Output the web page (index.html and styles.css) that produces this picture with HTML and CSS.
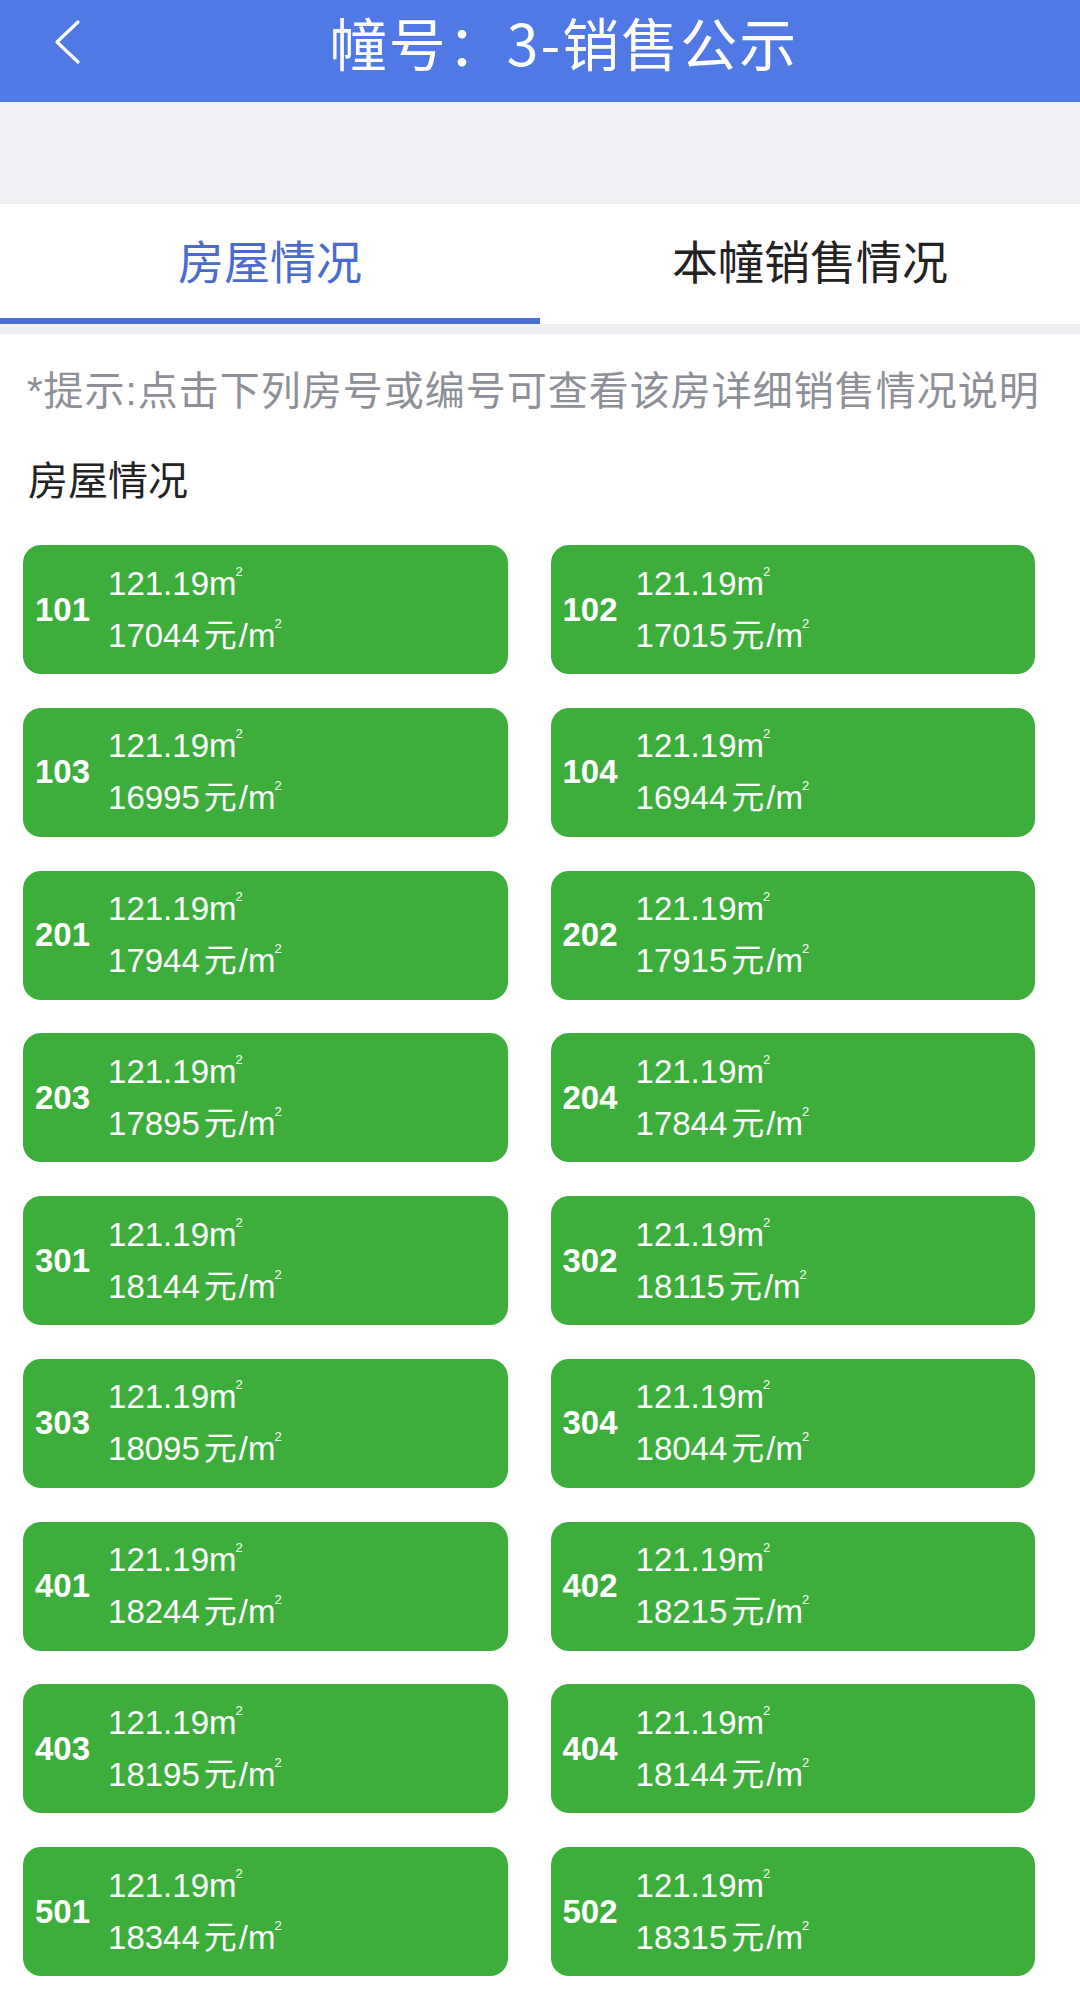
FILE: index.html
```html
<!DOCTYPE html>
<html lang="zh-CN">
<head>
<meta charset="utf-8">
<title>幢号：3-销售公示</title>
<link rel="stylesheet" href="styles.css">
</head>
<body>
<div class="page">
  <header class="topbar">
    <div class="back">
      <svg width="100" height="102" viewBox="0 0 100 102"><path d="M78 22 L57 42 L78 62" fill="none" stroke="#fff" stroke-width="3.2" stroke-linecap="round" stroke-linejoin="round"/></svg>
    </div>
    <h1 class="title">幢号：3-销售公示</h1>
    <div class="spacer"></div>
  </header>
  <div class="band"></div>
  <nav class="tabs">
    <div class="tab active">房屋情况</div>
    <div class="tab">本幢销售情况</div>
  </nav>
  <div class="divider"></div>
  <main class="content">
    <p class="hint">*提示:点击下列房号或编号可查看该房详细销售情况说明</p>
    <h2 class="section">房屋情况</h2>
    <div class="grid">
      <div class="card"><span class="no">101</span><div class="info"><div>121.19m<span class="sq">2</span></div><div>17044<span class="yuan">元</span>/m<span class="sq">2</span></div></div></div>
      <div class="card"><span class="no">102</span><div class="info"><div>121.19m<span class="sq">2</span></div><div>17015<span class="yuan">元</span>/m<span class="sq">2</span></div></div></div>
      <div class="card"><span class="no">103</span><div class="info"><div>121.19m<span class="sq">2</span></div><div>16995<span class="yuan">元</span>/m<span class="sq">2</span></div></div></div>
      <div class="card"><span class="no">104</span><div class="info"><div>121.19m<span class="sq">2</span></div><div>16944<span class="yuan">元</span>/m<span class="sq">2</span></div></div></div>
      <div class="card"><span class="no">201</span><div class="info"><div>121.19m<span class="sq">2</span></div><div>17944<span class="yuan">元</span>/m<span class="sq">2</span></div></div></div>
      <div class="card"><span class="no">202</span><div class="info"><div>121.19m<span class="sq">2</span></div><div>17915<span class="yuan">元</span>/m<span class="sq">2</span></div></div></div>
      <div class="card"><span class="no">203</span><div class="info"><div>121.19m<span class="sq">2</span></div><div>17895<span class="yuan">元</span>/m<span class="sq">2</span></div></div></div>
      <div class="card"><span class="no">204</span><div class="info"><div>121.19m<span class="sq">2</span></div><div>17844<span class="yuan">元</span>/m<span class="sq">2</span></div></div></div>
      <div class="card"><span class="no">301</span><div class="info"><div>121.19m<span class="sq">2</span></div><div>18144<span class="yuan">元</span>/m<span class="sq">2</span></div></div></div>
      <div class="card"><span class="no">302</span><div class="info"><div>121.19m<span class="sq">2</span></div><div>18115<span class="yuan">元</span>/m<span class="sq">2</span></div></div></div>
      <div class="card"><span class="no">303</span><div class="info"><div>121.19m<span class="sq">2</span></div><div>18095<span class="yuan">元</span>/m<span class="sq">2</span></div></div></div>
      <div class="card"><span class="no">304</span><div class="info"><div>121.19m<span class="sq">2</span></div><div>18044<span class="yuan">元</span>/m<span class="sq">2</span></div></div></div>
      <div class="card"><span class="no">401</span><div class="info"><div>121.19m<span class="sq">2</span></div><div>18244<span class="yuan">元</span>/m<span class="sq">2</span></div></div></div>
      <div class="card"><span class="no">402</span><div class="info"><div>121.19m<span class="sq">2</span></div><div>18215<span class="yuan">元</span>/m<span class="sq">2</span></div></div></div>
      <div class="card"><span class="no">403</span><div class="info"><div>121.19m<span class="sq">2</span></div><div>18195<span class="yuan">元</span>/m<span class="sq">2</span></div></div></div>
      <div class="card"><span class="no">404</span><div class="info"><div>121.19m<span class="sq">2</span></div><div>18144<span class="yuan">元</span>/m<span class="sq">2</span></div></div></div>
      <div class="card"><span class="no">501</span><div class="info"><div>121.19m<span class="sq">2</span></div><div>18344<span class="yuan">元</span>/m<span class="sq">2</span></div></div></div>
      <div class="card"><span class="no">502</span><div class="info"><div>121.19m<span class="sq">2</span></div><div>18315<span class="yuan">元</span>/m<span class="sq">2</span></div></div></div>
    </div>
  </main>
</div>
</body>
</html>
```

FILE: styles.css
```css
* { box-sizing: border-box; }
html, body { margin: 0; padding: 0; }
body {
  width: 1080px;
  height: 1995px;
  overflow: hidden;
  background: #ffffff;
  font-family: "Liberation Sans", "Noto Sans CJK SC", sans-serif;
  color: #222222;
}
.topbar {
  height: 102px;
  background: #5079E5;
  display: grid;
  grid-template-columns: 112px 1fr 64px;
  align-items: start;
}
.back { height: 102px; }
.back svg { display: block; }
.title {
  margin: 0;
  font-family: "Noto Sans CJK SC", sans-serif;
  font-weight: 400;
  font-size: 57px;
  line-height: 82px;
  letter-spacing: 2px;
  color: #ffffff;
  text-align: center;
  white-space: nowrap;
}
.band {
  height: 102px;
  background: #EFF0F4;
}
.tabs {
  display: grid;
  grid-template-columns: 1fr 1fr;
  background: #ffffff;
}
.tab {
  height: 120px;
  padding-bottom: 6px;
  line-height: 110px;
  text-align: center;
  font-family: "Noto Sans CJK SC", sans-serif;
  font-size: 46px;
  color: #222222;
  border-bottom: 6px solid transparent;
}
.tab.active {
  color: #4B6BCF;
  border-bottom-color: #4A6FD6;
}
.divider {
  height: 10px;
  background: #EFF0F4;
}
.content { padding: 0; }
.hint {
  margin: 27px 0 0;
  padding: 0 0 0 27px;
  font-size: 40px;
  line-height: 60px;
  color: #8E9098;
  white-space: nowrap;
  letter-spacing: 1px;
}
.section {
  margin: 27px 0 0;
  padding-left: 28px;
  font-family: "Noto Sans CJK SC", sans-serif;
  font-weight: 400;
  font-size: 40px;
  line-height: 60px;
  color: #222222;
}
.grid {
  margin-top: 37px;
  padding: 0 45px 0 23px;
  display: grid;
  grid-template-columns: 1fr 1fr;
  column-gap: 43px;
  row-gap: 33.75px;
}
.card {
  height: 129px;
  background: #3DAE3C;
  border-radius: 18px;
  display: flex;
  align-items: center;
  gap: 18px;
  padding-left: 12px;
  color: #ffffff;
}
.no {
  font-weight: 700;
  font-size: 33px;
  line-height: 40px;
}
.info {
  font-size: 33px;
  line-height: 52px;
  white-space: nowrap;
}
.yuan {
  margin: 0 2px 0 4px;
}
.sq {
  font-size: 13px;
  line-height: 0;
  vertical-align: 19px;
  margin-left: -1px;
}
```
